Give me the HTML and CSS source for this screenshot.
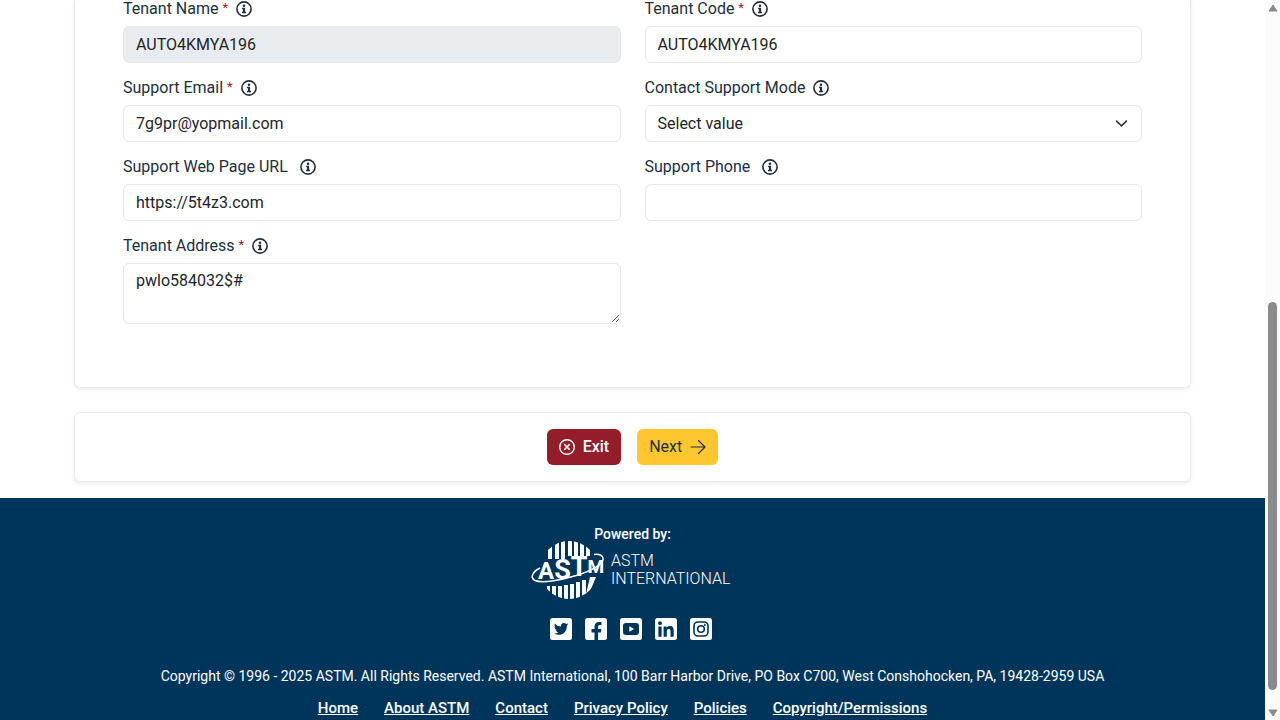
FILE: index.html
```html
<!DOCTYPE html>
<html lang="en">
<head>
<meta charset="utf-8">
<title>Tenant Details</title>
<link rel="stylesheet" href="styles.css">
</head>
<body>
<svg class="defs" aria-hidden="true">
  <symbol id="info" viewBox="0 0 16 16">
    <circle cx="8" cy="8" r="7.1" fill="none" stroke="currentColor" stroke-width="1.6"/>
    <circle cx="8" cy="4.7" r="1.3"/>
    <path d="M6.100 6.700h3v4.100h1v1.500H6v-1.500h1V8.200h-.9z"/>
  </symbol>
</svg>
<div class="page">
  <main class="content">
    <form class="form" id="tenant">
      <div class="card fields">
        <div class="field">
          <div class="label"><label for="name">Tenant Name <span class="req">*</span></label><svg class="info"><use href="#info"/></svg></div>
          <input class="control" id="name" type="text" value="AUTO4KMYA196" disabled>
        </div>
        <div class="field">
          <div class="label"><label for="code">Tenant Code <span class="req">*</span></label><svg class="info"><use href="#info"/></svg></div>
          <input class="control" id="code" type="text" value="AUTO4KMYA196">
        </div>
        <div class="field">
          <div class="label"><label for="email">Support Email <span class="req">*</span></label><svg class="info"><use href="#info"/></svg></div>
          <input class="control" id="email" type="email" value="7g9pr@yopmail.com">
        </div>
        <div class="field">
          <div class="label"><label for="mode">Contact Support Mode</label><svg class="info"><use href="#info"/></svg></div>
          <div class="select">
            <select class="control" id="mode"><option>Select value</option></select>
            <svg class="chevron" viewBox="0 0 16 16"><path d="m2 5 6 6 6-6" fill="none" stroke="#343a40" stroke-width="2" stroke-linecap="round" stroke-linejoin="round"/></svg>
          </div>
        </div>
        <div class="field">
          <div class="label spaced"><label for="url">Support Web Page URL</label><svg class="info"><use href="#info"/></svg></div>
          <input class="control" id="url" type="url" value="https://5t4z3.com">
        </div>
        <div class="field">
          <div class="label spaced"><label for="phone">Support Phone</label><svg class="info"><use href="#info"/></svg></div>
          <input class="control" id="phone" type="tel">
        </div>
        <div class="field">
          <div class="label"><label for="address">Tenant Address <span class="req">*</span></label><svg class="info"><use href="#info"/></svg></div>
          <textarea class="control area" id="address">pwlo584032$#</textarea>
        </div>
      </div>
      <div class="card actions">
        <button class="btn exit" type="button">
          <svg width="16" height="16" viewBox="0 0 16 16" fill="none" stroke="currentColor"><circle cx="8" cy="8" r="7.3" stroke-width="1.4"/><path d="m5.3 5.3 5.4 5.4m0-5.4-5.4 5.4" stroke-width="1.6"/></svg>
          Exit
        </button>
        <button class="btn next" type="submit">
          Next
          <svg width="16" height="16" viewBox="0 0 16 16" fill="none" stroke="currentColor" stroke-width="1.2" stroke-linecap="round" stroke-linejoin="round"><path d="M1 8h14M8.5 1.5 15 8l-6.500 6.500"/></svg>
        </button>
      </div>
    </form>
  </main>
  <footer class="footer">
    <div class="powered">Powered by:</div>
    <svg class="logo" viewBox="0 0 200 60" role="img" aria-label="ASTM International">
      <clipPath id="globe"><circle cx="38" cy="30" r="29"/></clipPath>
      <text class="mark" x="7" y="39" fill="#fff"><tspan font-size="24">A</tspan><tspan font-size="27">S</tspan><tspan font-size="27" dy="-3">T</tspan><tspan font-size="19" dy="-3">M</tspan></text>
      <g clip-path="url(#globe)" fill="#fff">
        <path d="M17 0h4v19h-4zM24 0h4v19h-4zM30 0h4v19h-4zM37 0h4v16h-4zM43 0h4v16h-4zM49 0h4v16h-4zM55 0h4v16h-4z"/>
        <path d="M16 46h3v16h-3zM21 46h4v17h-4zM27 46h4v17h-4zM33 45h4v17h-4zM39 44h4v18h-4zM45 42h4v20h-4zM51 40h4v22h-4zM59 37h6l-7 17h-3z"/>
      </g>
      <path d="M9 28C1 32-1 38 4 40.500 18 46 75 30 72 18c-1-3-5-4-9-3.500" fill="none" stroke="#fff" stroke-width="1.500"/>
      <g class="word" fill="#fff">
        <text x="80" y="26" font-size="16">ASTM</text>
        <text x="80" y="44" font-size="16">INTERNATIONAL</text>
      </g>
    </svg>
    <div class="social">
      <a href="#" aria-label="Twitter"><svg viewBox="0 0 22 22"><rect width="22" height="22" rx="2.500" fill="#fff"/><path fill="#00355b" d="M18.500 6.300c-.5.300-1.100.4-1.700.5.600-.4 1-.9 1.200-1.600-.6.300-1.200.6-1.900.7a3 3 0 0 0-5.100 2.700c-2.500-.1-4.700-1.300-6.100-3.100-.8 1.300-.4 3.100.9 4-.5 0-.9-.2-1.300-.4 0 1.500 1 2.700 2.400 3-.4.100-.9.100-1.300 0 .4 1.200 1.500 2 2.800 2.100-1.300 1-2.800 1.400-4.400 1.200 5.800 3.600 12.800.100 12.800-7.200 0-.1 0-.3 0-.4.700-.4 1.200-.9 1.700-1.500z"/></svg></a>
      <a href="#" aria-label="Facebook"><svg viewBox="0 0 22 22"><rect width="22" height="22" rx="2.500" fill="#fff"/><path fill="#00355b" d="M9.500 22v-7.500H6.500v-3.400h3V8.500c0-3 1.800-4.600 4.500-4.600 1.300 0 2.500.2 2.500.2v2.900h-1.500c-1.500 0-1.900.9-1.900 1.800v2.300h3.300l-.5 3.400h-2.800V22z"/></svg></a>
      <a href="#" aria-label="YouTube"><svg viewBox="0 0 22 22"><rect width="22" height="22" rx="2.500" fill="#fff"/><rect x="3" y="5" width="16" height="12" rx="3" fill="#00355b"/><path fill="#fff" d="m9.300 8.300 4.800 2.700-4.800 2.700z"/></svg></a>
      <a href="#" aria-label="LinkedIn"><svg viewBox="0 0 22 22"><rect width="22" height="22" rx="2.500" fill="#fff"/><g fill="#00355b"><circle cx="5" cy="5.200" r="1.900"/><path d="M3.400 8.400h3.200v10.400H3.400zM8.600 8.400h3v1.400c.5-.9 1.600-1.700 3.200-1.700 3.300 0 3.900 2.100 3.900 5v5.700h-3.200v-5.100c0-1.200 0-2.800-1.700-2.800s-2 1.300-2 2.700v5.200H8.600z"/></g></svg></a>
      <a href="#" aria-label="Instagram"><svg viewBox="0 0 22 22"><rect width="22" height="22" rx="2.500" fill="#fff"/><g fill="none" stroke="#00355b" stroke-width="1.600"><rect x="4" y="4" width="14" height="14" rx="4"/><circle cx="11" cy="11" r="3.300"/></g><circle cx="14.900" cy="7.100" r="1" fill="#00355b"/></svg></a>
    </div>
    <p class="copyright">Copyright © 1996 - 2025 ASTM. All Rights Reserved. ASTM International, 100 Barr Harbor Drive, PO Box C700, West Conshohocken, PA, 19428-2959 USA</p>
    <nav class="links">
      <a href="#">Home</a><a href="#">About ASTM</a><a href="#">Contact</a><a href="#">Privacy Policy</a><a href="#">Policies</a><a href="#">Copyright/Permissions</a>
    </nav>
  </footer>
</div>
<div class="scrollbar" aria-hidden="true">
  <svg width="10" height="8" viewBox="0 0 10 8"><path d="M5 1 9 7H1z" fill="#8b8b8b" stroke="#8b8b8b" stroke-linejoin="round"/></svg>
  <div class="track"><div class="thumb"></div></div>
  <svg width="10" height="8" viewBox="0 0 10 8"><path d="M5 7 9 1H1z" fill="#8b8b8b" stroke="#8b8b8b" stroke-linejoin="round"/></svg>
</div>
</body>
</html>
```
FILE: styles.css
```css
* { box-sizing: border-box; }
body {
  margin: 0;
  height: 100vh;
  display: flex;
  overflow: hidden;
  font: 16px/20px Roboto, "Liberation Sans", sans-serif;
  color: #212529;
  background: #fff;
}
.defs { position: absolute; width: 0; height: 0; }
.page { flex: 1; min-width: 0; height: 100vh; overflow: hidden; }
.content { max-width: 1141px; margin: 0 auto; padding: 0 12px 16px; }
.form { display: flex; flex-direction: column; gap: 24px; }
.card {
  background: #fff;
  border: 1px solid #e9ebed;
  border-radius: 6px;
  box-shadow: 0 2px 4px rgba(0, 0, 0, .075);
}
.fields {
  display: grid;
  grid-template-columns: 1fr 1fr;
  gap: 16px 24px;
  padding: 0 48px 63px;
  border-top: 0;
  border-radius: 0 0 6px 6px;
}
.label { display: flex; align-items: center; gap: 8px; height: 18px; margin-bottom: 8px; color: #212f3d; }
.label.spaced { gap: 12px; }
.req { color: #981f28; font-size: 13px; line-height: 13px; vertical-align: 2px; }
.info { width: 16px; height: 16px; fill: #212f3d; color: #212f3d; }
.control {
  display: block;
  width: 100%;
  height: 37px;
  padding: 0 12px;
  border: 1px solid #e6e8ea;
  border-radius: 6px;
  background: #fff;
  font: inherit;
  color: #212529;
  appearance: none;
}
.control:disabled { background: #e9ecef; opacity: 1; }
.area { height: 61px; padding: 7px 12px; resize: vertical; }
.select { position: relative; }
.chevron { position: absolute; right: 14px; top: 12px; width: 13px; height: 13px; pointer-events: none; }
.actions { display: flex; justify-content: center; gap: 16px; padding: 16px; }
.btn {
  display: flex;
  align-items: center;
  gap: 8px;
  height: 36px;
  padding: 0 12px;
  border: 0;
  border-radius: 6px;
  font: 500 16px/20px Roboto, "Liberation Sans", sans-serif;
}
.exit { background: #931d28; color: #fff; }
.next { background: #ffc72f; color: #212f3d; font-weight: 400; }
.footer {
  display: flex;
  flex-direction: column;
  align-items: center;
  padding: 26px 16px;
  background: #00355b;
  color: #fff;
  font-weight: 500;
}
.powered { font-size: 14px; line-height: 20px; }
.logo { width: 200px; height: 60px; margin: -4px 4px 0 0; overflow: visible; }
.mark { font-weight: 700; }
.word { font-weight: 300; }
.social { display: flex; gap: 13px; margin: 18px 4px 0 0; }
.social a, .social svg { display: block; width: 22px; height: 22px; }
.copyright { margin: 26px 0 0; font-size: 14px; line-height: 20px; font-weight: 400; white-space: nowrap; }
.links { display: flex; gap: 26px; margin-top: 12px; padding-right: 20px; font-size: 15px; }
.links a { color: #fff; }
.scrollbar {
  width: 15px;
  display: flex;
  flex-direction: column;
  align-items: center;
  justify-content: space-between;
  padding: 4px 0 3px;
  background: #fcfcfc;
}
.track { flex: 1; display: flex; align-items: flex-end; padding: 14px 0 19px; }
.thumb { width: 9px; height: 58.5%; border-radius: 5px; background: #8b8b8b; }
```
